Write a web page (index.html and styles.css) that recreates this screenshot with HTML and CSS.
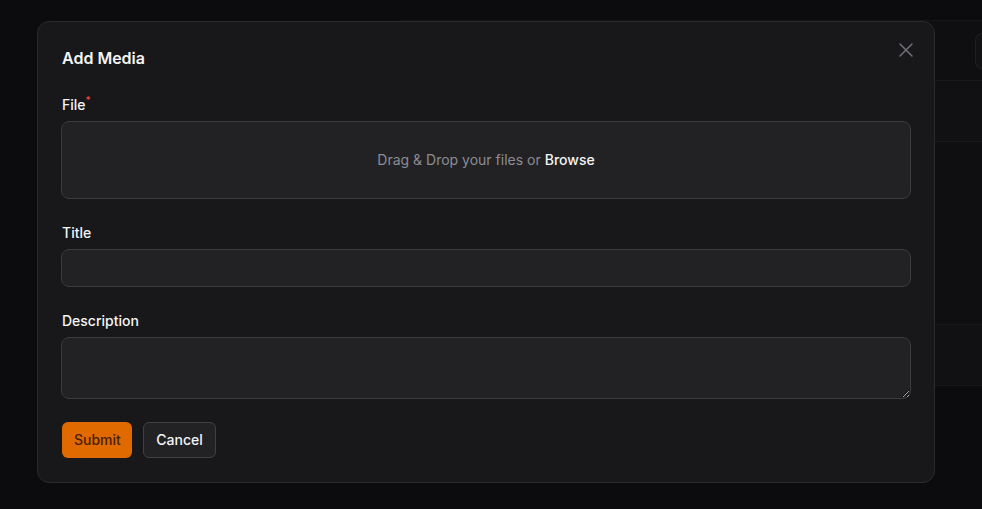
FILE: index.html
```html
<!DOCTYPE html>
<html lang="en">
<head>
<meta charset="utf-8">
<title>Add Media</title>
<link rel="stylesheet" href="styles.css">
</head>
<body>
<div class="page">
  <div class="page-card">
    <div class="page-head"><span class="page-btn"></span></div>
    <div class="page-row shaded"></div>
    <div class="page-body"></div>
    <div class="page-row shaded"></div>
  </div>
</div>
<div class="overlay">
  <div class="modal">
    <button class="close" aria-label="Close">
      <svg width="16" height="16" viewBox="0 0 16 16" fill="none" stroke="currentColor" stroke-width="1.5" stroke-linecap="round"><path d="M2 2L14 14M14 2L2 14"/></svg>
    </button>
    <h2 class="modal-title">Add Media</h2>
    <div class="field">
      <label class="label">File<span class="req">*</span></label>
      <div class="dropzone">Drag &amp; Drop your files or <span class="browse">Browse</span></div>
    </div>
    <div class="field">
      <label class="label">Title</label>
      <input class="input" type="text">
    </div>
    <div class="field">
      <label class="label">Description</label>
      <textarea class="textarea"></textarea>
    </div>
    <div class="actions">
      <button class="btn btn-primary">Submit</button>
      <button class="btn btn-secondary">Cancel</button>
    </div>
  </div>
</div>
</body>
</html>
```

FILE: styles.css
```css
* { box-sizing: border-box; }
html, body {
  margin: 0;
  padding: 0;
  background: #0c0c0e;
  font-family: Inter, "Noto Sans", sans-serif;
  width: 982px;
  height: 509px;
  overflow: hidden;
}
.page {
  padding-top: 20px;
  padding-left: 400px;
}
.page-card {
  border-top: 1px solid #161619;
  background: #0f0f11;
}
.page-head {
  height: 60px;
  display: flex;
  justify-content: flex-end;
  align-items: center;
  border-bottom: 1px solid #19191c;
}
.page-btn {
  width: 7px;
  height: 36px;
  border: 1px solid #1f1f23;
  border-right: 0;
  border-radius: 8px 0 0 8px;
  background: #121214;
}
.page-row {
  height: 61px;
  border-bottom: 1px solid #19191c;
}
.page-row.shaded { background: #111113; }
.page-body {
  height: 183px;
  border-bottom: 1px solid #19191c;
}
.overlay {
  position: fixed;
  inset: 0;
  padding: 21px 0 0 37px;
}
.modal {
  position: relative;
  width: 898px;
  background: #18181b;
  border: 1px solid #2a2a2e;
  border-radius: 12px;
  padding: 24px 23px;
  display: flex;
  flex-direction: column;
  gap: 23px;
}
.close {
  position: absolute;
  top: 20px;
  right: 20px;
  width: 16px;
  height: 16px;
  padding: 0;
  border: 0;
  background: none;
  color: #717178;
  display: flex;
}
.modal-title {
  margin: 0 0 1px 1px;
  font-size: 16px;
  line-height: 24px;
  font-weight: 600;
  color: #f4f4f5;
}
.field {
  display: flex;
  flex-direction: column;
  gap: 7px;
}
.label {
  height: 20px;
  font-size: 14px;
  line-height: 22px;
  font-weight: 500;
  color: #f4f4f5;
  padding-left: 1px;
}
.req {
  position: relative;
  top: -6px;
  color: #e5484d;
  font-size: 10px;
  line-height: 0;
}
.dropzone {
  height: 78px;
  border: 1px solid #3a3a3f;
  border-radius: 8px;
  background: #222225;
  display: flex;
  align-items: center;
  justify-content: center;
  padding-bottom: 2px;
  font-size: 14px;
  color: #8c8c93;
  gap: 4px;
}
.browse {
  color: #f4f4f5;
  font-weight: 500;
}
.input {
  height: 38px;
  border: 1px solid #3a3a3f;
  border-radius: 8px;
  background: #222225;
  font: inherit;
}
.textarea {
  height: 62px;
  border: 1px solid #3a3a3f;
  border-radius: 8px;
  background: #222225;
  font: inherit;
  resize: vertical;
}
.actions {
  display: flex;
  gap: 11px;
  padding-left: 1px;
}
.btn {
  height: 36px;
  border-radius: 6px;
  font-family: inherit;
  font-size: 14px;
  font-weight: 500;
  padding: 0 12px 2px;
}
.btn-primary {
  width: 70px;
  background: #e06a00;
  border: 0;
  color: #4a1d00;
}
.btn-secondary {
  width: 73px;
  background: #222225;
  border: 1px solid #3f3f45;
  color: #f4f4f5;
}
```
